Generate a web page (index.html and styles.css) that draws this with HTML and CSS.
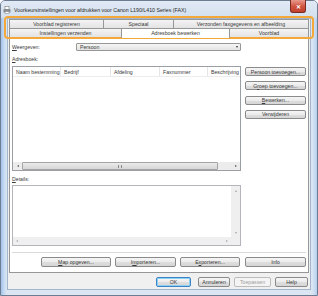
FILE: index.html
```html
<!DOCTYPE html>
<html lang="nl">
<head>
<meta charset="utf-8">
<title>Voorkeursinstellingen</title>
<link rel="stylesheet" href="styles.css">
</head>
<body>
<div class="window">
  <div class="titlebar">
    <svg class="appicon" width="8" height="8" viewBox="0 0 8 8">
      <rect x="2" y="0.5" width="4" height="3" fill="#fff" stroke="#7a7a7a" stroke-width="0.6"/>
      <rect x="0.5" y="3" width="7" height="3.5" rx="0.6" fill="#8a8f96"/>
      <rect x="2" y="5.5" width="4" height="2" fill="#fff" stroke="#7a7a7a" stroke-width="0.5"/>
    </svg>
    <span class="title">Voorkeursinstellingen voor afdrukken voor Canon L190/L410 Series (FAX)</span>
    <div class="close"><span>✕</span></div>
  </div>
  <div class="client">
    <div class="tabs">
      <div class="tabrow">
        <div class="tab t-a">Voorblad registreren</div>
        <div class="tab t-b">Speciaal</div>
        <div class="tab t-c">Verzonden faxgegevens en afbeelding</div>
      </div>
      <div class="tabrow">
        <div class="tab t-d">Instellingen verzenden</div>
        <div class="tab t-e active">Adresboek bewerken</div>
        <div class="tab t-f">Voorblad</div>
      </div>
    </div>
    <div class="panel">
      <div class="view-row">
        <span class="view-label"><u>W</u>eergeven:</span>
        <div class="select"><span>Persoon</span><span class="arrow-down"></span></div>
      </div>
      <div class="field-label"><u>A</u>dresboek:</div>
      <div class="book">
        <div class="list">
          <div class="list-head">
            <div class="col c1">Naam bestemming</div>
            <div class="col c2">Bedrijf</div>
            <div class="col c3">Afdeling</div>
            <div class="col c4">Faxnummer</div>
            <div class="col c5">Beschrijving</div>
          </div>
          <div class="list-body"></div>
          <div class="hscroll">
            <div class="sb-btn"><span class="arrow-left"></span></div>
            <div class="thumb"><span class="grip"></span></div>
            <div class="track"></div>
            <div class="sb-btn"><span class="arrow-right"></span></div>
          </div>
        </div>
        <div class="side-buttons">
          <div class="btn">Persoon toevoegen...</div>
          <div class="btn">G<u>r</u>oep toevoegen...</div>
          <div class="btn"><u>B</u>ewerken...</div>
          <div class="btn">Verwijderen</div>
        </div>
      </div>
      <div class="field-label details-label"><u>D</u>etails:</div>
      <div class="details">
        <div class="details-main">
          <div class="details-body"></div>
          <div class="vscroll">
            <span class="arrow-up dis"></span>
            <span class="arrow-down dis"></span>
          </div>
        </div>
        <div class="details-bottom">
          <div class="hscroll2">
            <span class="arrow-left dis"></span>
            <span class="arrow-right dis"></span>
          </div>
          <div class="corner"></div>
        </div>
      </div>
      <div class="separator"></div>
      <div class="panel-buttons">
        <div class="btn b-map"><u>M</u>ap opgeven...</div>
        <div class="btn b-imp">I<u>m</u>porteren...</div>
        <div class="btn b-exp">E<u>x</u>porteren...</div>
        <div class="btn b-info">Info</div>
      </div>
    </div>
    <div class="dialog-buttons">
      <div class="btn default b-ok">OK</div>
      <div class="btn b-ann">Annuleren</div>
      <div class="btn disabled b-toe">Toepassen</div>
      <div class="btn b-help">Help</div>
    </div>
  </div>
</div>
<div class="highlight"></div>
</body>
</html>
```
FILE: styles.css
```css
* { box-sizing: border-box; }
html, body { margin: 0; padding: 0; }
body {
  width: 318px;
  height: 296px;
  overflow: hidden;
  position: relative;
  background: #ffffff;
  font-family: "Liberation Sans", Arial, sans-serif;
  font-size: 5.2px;
  color: #3a3a3a;
}
u { text-decoration: underline; text-decoration-thickness: 0.5px; text-underline-offset: 0.6px; }

.window {
  width: 318px;
  height: 296px;
  display: flex;
  flex-direction: column;
  border: 1px solid #6d7c91;
  border-radius: 5px 5px 0 0;
  background: linear-gradient(90deg, #a3c3ea 0, #c5daf2 3px, #dce6f2 6px, #dce6f2 311px, #c5daf2 314px, #a3c3ea 318px);
}

.titlebar {
  height: 17px;
  flex: none;
  display: flex;
  align-items: center;
  padding-left: 2px;
  background: linear-gradient(#e1eaf5, #d2dfee);
  border-radius: 4px 4px 0 0;
}
.appicon { flex: none; margin-right: 3px; margin-top: 1px; }
.title { flex: 1; font-size: 5.25px; color: #2a2a2a; white-space: nowrap; margin-top: 1px; }
.close {
  align-self: flex-start;
  width: 16px;
  height: 13px;
  margin-right: 11px;
  margin-top: -1px;
  border: 1px solid #7a2b24;
  border-top: none;
  border-radius: 0 0 3px 3px;
  background: linear-gradient(#e89a8d, #d0523f 55%, #c2402f);
  display: flex;
  align-items: center;
  justify-content: center;
  color: #fff;
  font-size: 6px;
  font-weight: bold;
}

.client {
  flex: 1;
  margin: 0 6px 5px 6px;
  background: #f0f0f0;
  border: 1px solid #a3b5cb;
  display: flex;
  flex-direction: column;
  padding: 0 1px;
}

.tabs { display: flex; flex-direction: column; width: 300px; }
.tabrow { display: flex; height: 9px; }
.tab {
  height: 9px;
  border: 1px solid #959799;
  border-bottom: none;
  background: linear-gradient(#f4f4f4, #e3e3e3);
  display: flex;
  align-items: center;
  justify-content: center;
  white-space: nowrap;
}
.tab + .tab { margin-left: -1px; }
.t-a { width: 95px; }
.t-b { width: 71px; }
.t-c { width: 136px; }
.t-d { width: 113px; }
.t-e { width: 109px; }
.t-f { width: 80px; }
.tab.active {
  background: #ffffff;
  height: 10px;
  margin-bottom: -1px;
  position: relative;
  z-index: 1;
  padding-bottom: 1px;
}

.panel {
  width: 300px;
  height: 236px;
  border: 1px solid #959799;
  background: #ffffff;
  padding: 0 2px;
  display: flex;
  flex-direction: column;
}

.view-row { display: flex; align-items: center; height: 8px; margin-top: 5px; }
.view-label { width: 64px; }
.select {
  width: 165px;
  height: 8px;
  border: 1px solid #979797;
  border-radius: 1px;
  background: linear-gradient(#f5f5f5, #e4e4e4);
  display: flex;
  align-items: center;
  justify-content: space-between;
  padding: 0 2px 0 3px;
}
.arrow-down {
  width: 0; height: 0;
  border-left: 1.5px solid transparent;
  border-right: 1.5px solid transparent;
  border-top: 2px solid #333;
}
.arrow-up {
  width: 0; height: 0;
  border-left: 1.5px solid transparent;
  border-right: 1.5px solid transparent;
  border-bottom: 2px solid #333;
}
.arrow-left {
  width: 0; height: 0;
  border-top: 1.5px solid transparent;
  border-bottom: 1.5px solid transparent;
  border-right: 2px solid #555;
}
.arrow-right {
  width: 0; height: 0;
  border-top: 1.5px solid transparent;
  border-bottom: 1.5px solid transparent;
  border-left: 2px solid #555;
}
.arrow-down.dis { border-top-color: #a8a8a8; }
.arrow-up.dis { border-bottom-color: #a8a8a8; }
.arrow-left.dis { border-right-color: #a8a8a8; }
.arrow-right.dis { border-left-color: #a8a8a8; }

.field-label { height: 8px; margin-top: 4px; display: flex; align-items: center; }

.book { display: flex; margin-top: 3px; height: 105px; }
.list {
  width: 229px;
  height: 105px;
  border: 1px solid #9a9ea5;
  display: flex;
  flex-direction: column;
}
.list-head { display: flex; height: 10px; border-bottom: 1px solid #ececec; }
.col {
  display: flex;
  align-items: center;
  padding-left: 3px;
  border-right: 1px solid #e6e6e6;
  white-space: nowrap;
  overflow: hidden;
}
.c1 { width: 48px; }
.c2 { width: 50px; }
.c3 { width: 49px; }
.c4 { width: 48px; }
.c5 { flex: 1; border-right: none; }
.list-body { flex: 1; }
.hscroll { display: flex; height: 8px; background: #ececec; }
.sb-btn { width: 9px; display: flex; align-items: center; justify-content: center; }
.thumb {
  width: 196px;
  border: 1px solid #a4a4a4;
  border-radius: 1px;
  background: linear-gradient(#ebebeb, #d6d6d6);
  display: flex;
  align-items: center;
  justify-content: center;
}
.grip { width: 4px; height: 3px; border-left: 1px solid #888; border-right: 1px solid #888; }
.track { flex: 1; }

.side-buttons {
  width: 61px;
  margin-left: 4px;
  display: flex;
  flex-direction: column;
  gap: 5.3px;
  padding-top: 1px;
}
.btn {
  height: 9px;
  border: 1px solid #8a8a8a;
  border-radius: 2px;
  background: linear-gradient(#f6f6f6, #ebebeb 50%, #dedede 51%, #d6d6d6);
  display: flex;
  align-items: center;
  justify-content: center;
  white-space: nowrap;
}

.details-label { margin-top: 4px; }
.details {
  margin-top: 2px;
  width: 229px;
  height: 61px;
  border: 1px solid #b3b5ba;
  display: flex;
  flex-direction: column;
}
.details-main { flex: 1; display: flex; }
.details-body { flex: 1; }
.vscroll {
  width: 9px;
  background: #efefef;
  display: flex;
  flex-direction: column;
  align-items: center;
  justify-content: space-between;
  padding: 4px 0 3px;
}
.details-bottom { display: flex; height: 8px; }
.hscroll2 {
  flex: 1;
  background: #efefef;
  display: flex;
  align-items: center;
  justify-content: space-between;
  padding: 0 3px 0 3px;
}
.corner { width: 9px; background: #efefef; }

.separator { height: 1px; margin-top: 6px; background: #dadada; }

.panel-buttons { display: flex; justify-content: flex-end; margin-top: 4px; }
.panel-buttons .btn { height: 10px; }
.b-map { width: 70px; }
.b-imp { width: 61px; margin-left: 4px; }
.b-exp { width: 60px; margin-left: 4px; }
.b-info { width: 61px; margin-left: 5px; }

.dialog-buttons { display: flex; justify-content: flex-end; margin-top: 4px; padding-right: 1px; }
.dialog-buttons .btn { height: 10px; }
.b-ok { width: 35px; }
.b-ann { width: 32px; margin-left: 7px; }
.b-toe { width: 37px; margin-left: 4px; }
.b-help { width: 33px; margin-left: 4px; }
.btn.default {
  border-color: #3a83c4;
  box-shadow: inset 0 0 0 1px #8fd0f5;
}
.btn.disabled {
  border-color: #bcbcbc;
  background: #f4f4f4;
  color: #a0a0a0;
}

.highlight {
  position: absolute;
  left: 4px;
  top: 16px;
  width: 310px;
  height: 23px;
  border: 2px solid #f5a83a;
  border-radius: 4px;
  pointer-events: none;
}
```
